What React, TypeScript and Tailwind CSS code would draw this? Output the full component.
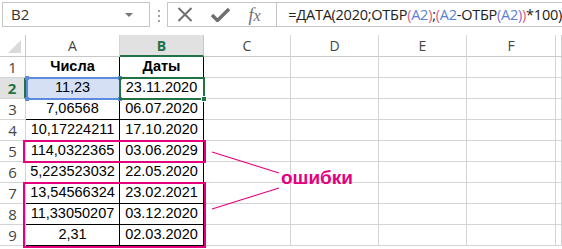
import React from "react";

const cols = [
  { key: "A", w: "w-[94px]" },
  { key: "B", w: "w-[84px]" },
  { key: "C", w: "w-[87px]" },
  { key: "D", w: "w-[88px]" },
  { key: "E", w: "w-[88px]" },
  { key: "F", w: "w-[89px]" },
  { key: "G", w: "flex-1" },
];

const data = [
  ["Числа", "Даты"],
  ["11,23", "23.11.2020"],
  ["7,06568", "06.07.2020"],
  ["10,17224211", "17.10.2020"],
  ["114,0322365", "03.06.2029"],
  ["5,223523032", "22.05.2020"],
  ["13,54566324", "23.02.2021"],
  ["11,33050207", "03.12.2020"],
  ["2,31", "02.03.2020"],
];

const Ref = ({ children }: { children: React.ReactNode }) => (
  <span className="text-[#5b7fd5]">{children}</span>
);
const P1 = ({ children }: { children: React.ReactNode }) => (
  <span className="text-[#e0607e]">{children}</span>
);
const P2 = ({ children }: { children: React.ReactNode }) => (
  <span className="text-[#9966cc]">{children}</span>
);

const App = () => {
  return (
    <div className="relative w-[562px] h-[249px] overflow-hidden bg-white font-['Liberation_Sans',sans-serif] text-[#222]">
      {/* formula bar */}
      <div className="flex h-[35px] items-start pt-[2px] pl-[2px]">
        <div className="flex h-[25px] w-[152px] items-center justify-between border border-[#c6c6c6] pl-[8px] pr-[16px] text-[15px] font-['Open_Sans',sans-serif] text-[#333]">
          <span>B2</span>
          <span className="h-0 w-0 border-x-[4px] border-t-[4px] border-x-transparent border-t-[#777]" />
        </div>
        <div className="flex w-[18px] flex-col items-center gap-[3px] pt-[8px]">
          <span className="h-[2px] w-[2px] bg-[#a0a0a0]" />
          <span className="h-[2px] w-[2px] bg-[#a0a0a0]" />
          <span className="h-[2px] w-[2px] bg-[#a0a0a0]" />
        </div>
        <div className="flex h-[25px] w-[113px] items-center border border-[#c6c6c6] pl-[9px] gap-[18px]">
          <svg width="16" height="15" viewBox="0 0 16 15">
            <path d="M1.5 1 L14.5 14 M14.5 1 L1.5 14" stroke="#6f6f6f" strokeWidth="2" fill="none" />
          </svg>
          <svg width="19" height="15" viewBox="0 0 19 15">
            <path d="M1 8 L6.5 13.5 L18 2" stroke="#6f6f6f" strokeWidth="3.4" fill="none" />
          </svg>
          <span className="font-['Liberation_Serif',serif] italic text-[18px] text-[#6f6f6f] leading-none">
            f<span className="text-[16px]">x</span>
          </span>
        </div>
        <div className="flex h-[25px] flex-1 items-center border border-l-0 border-r-0 border-[#c6c6c6] pl-[11px] text-[14.5px] font-['Open_Sans',sans-serif] tracking-[-0.25px] text-[#222] whitespace-nowrap">
          =ДАТА(2020;ОТБР<P1>(</P1>
          <Ref>A2</Ref>
          <P1>)</P1>;<P1>(</P1>
          <Ref>A2</Ref>-ОТБР<P2>(</P2>
          <Ref>A2</Ref>
          <P2>)</P2>
          <P1>)</P1>*100)
        </div>
      </div>

      {/* column headers */}
      <div className="flex h-[22px] text-[14px] text-[#444] font-['Open_Sans',sans-serif]">
        <div className="flex w-[26px] items-end justify-end border-r border-b border-[#c8c8c8] pr-[4px] pb-[3px]">
          <svg width="13" height="13" viewBox="0 0 13 13">
            <polygon points="13,0 13,13 0,13" fill="#dadada" />
          </svg>
        </div>
        {cols.map((c) =>
          c.key === "B" ? (
            <div
              key={c.key}
              className={`${c.w} flex items-center justify-center border-r border-b-2 border-r-[#c8c8c8] border-b-[#217346] bg-[#e1e1e1] font-bold text-[#217346]`}
            >
              B
            </div>
          ) : (
            <div
              key={c.key}
              className={`${c.w} flex items-center justify-center border-r border-b border-[#d4d4d4] border-b-[#c8c8c8]`}
            >
              {c.key === "G" ? "" : c.key}
            </div>
          )
        )}
      </div>

      {/* rows */}
      {data.map((row, i) => (
        <div key={i} className="flex h-[21px]">
          {i === 1 ? (
            <div className="flex w-[26px] items-center justify-center border-r-2 border-b border-r-[#217346] border-b-[#d4d4d4] bg-[#e1e1e1] text-[15px] font-bold text-[#217346] font-['Open_Sans',sans-serif]">
              {i + 1}
            </div>
          ) : (
            <div className="flex w-[26px] items-center justify-center border-r border-b border-[#d4d4d4] text-[15px] text-[#444] font-['Open_Sans',sans-serif]">
              {i + 1}
            </div>
          )}
          {cols.map((c, j) =>
            j < 2 ? (
              <div
                key={c.key}
                className={`${c.w} flex items-center justify-center border-r border-b border-black text-[14.5px] text-black ${
                  i === 0 ? "font-bold" : ""
                } ${i === 1 && j === 0 ? "bg-[#d6e0f5]" : ""}`}
              >
                {row[j]}
              </div>
            ) : (
              <div key={c.key} className={`${c.w} border-r border-b border-[#d4d4d4]`} />
            )
          )}
        </div>
      ))}

      {/* A2 reference highlight */}
      <div className="absolute left-[26px] top-[77px] h-[23px] w-[95px] border-2 border-[#5b8ae0]">
        <span className="absolute -left-[3px] -top-[3px] h-[4px] w-[4px] bg-[#5b8ae0]" />
        <span className="absolute -right-[3px] -top-[3px] h-[4px] w-[4px] bg-[#5b8ae0]" />
        <span className="absolute -left-[3px] -bottom-[3px] h-[4px] w-[4px] bg-[#5b8ae0]" />
        <span className="absolute -right-[3px] -bottom-[3px] h-[4px] w-[4px] bg-[#5b8ae0]" />
      </div>

      {/* B2 active cell */}
      <div className="absolute left-[119px] top-[77px] h-[23px] w-[86px] border-2 border-[#217346]">
        <span className="absolute -right-[4px] -bottom-[4px] h-[6px] w-[6px] border border-white bg-[#217346]" />
      </div>

      {/* error boxes */}
      <div className="absolute left-[23px] top-[140px] h-[23px] w-[183px] border-[2.5px] border-[#e5007d]" />
      <div className="absolute left-[23px] top-[182px] h-[66px] w-[183px] border-[2.5px] border-[#e5007d]" />

      {/* callout */}
      <svg className="absolute left-0 top-0" width="562" height="249">
        <line x1="212" y1="152" x2="279" y2="173" stroke="#e5007d" strokeWidth="1.2" />
        <line x1="212" y1="209" x2="279" y2="188" stroke="#e5007d" strokeWidth="1.2" />
      </svg>
      <div className="absolute left-[281px] top-[168px] text-[19px] font-bold leading-none text-[#e5007d] font-['Liberation_Sans',sans-serif]">
        ошибки
      </div>
    </div>
  );
};

export default App;
